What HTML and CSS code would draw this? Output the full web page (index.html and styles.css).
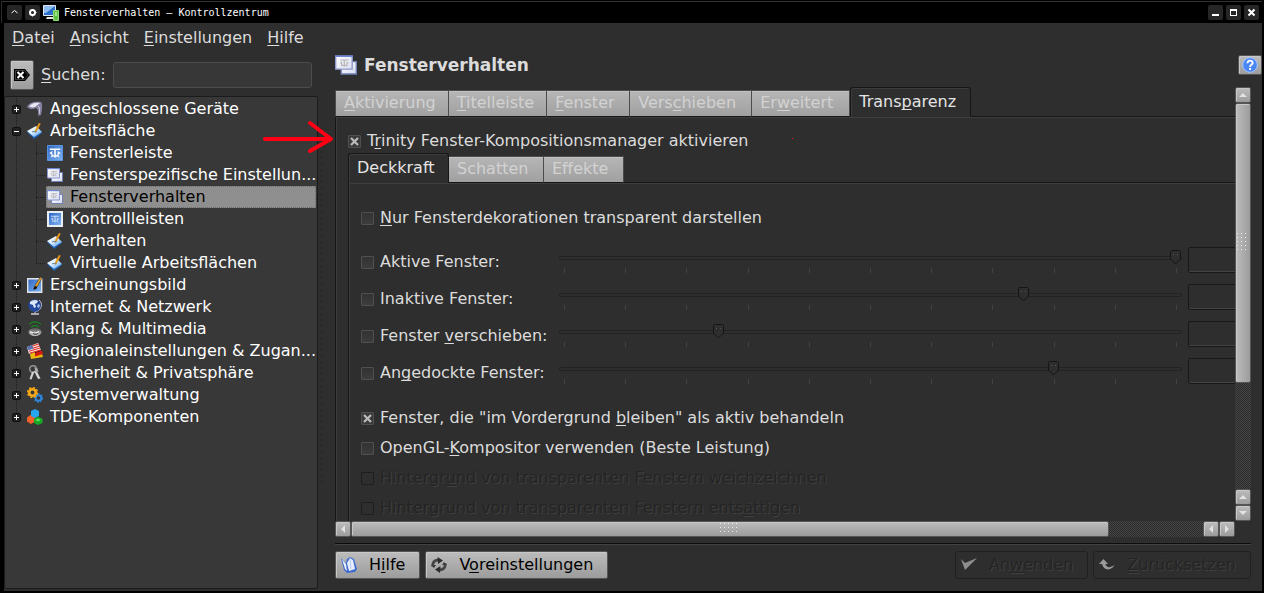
FILE: index.html
```html
<!DOCTYPE html>
<html lang="de">
<head>
<meta charset="utf-8">
<title>Fensterverhalten – Kontrollzentrum</title>
<link rel="stylesheet" href="styles.css">
</head>
<body>
<svg class="defs" aria-hidden="true">
  <defs>
    <linearGradient id="gBlue" x1="0" y1="0" x2="1" y2="1"><stop offset="0" stop-color="#2f66c4"/><stop offset="1" stop-color="#7fb4f2"/></linearGradient>
    <linearGradient id="gDesk" x1="0" y1="0" x2="1" y2="1"><stop offset="0" stop-color="#ffffff"/><stop offset="0.5" stop-color="#d8ecff"/><stop offset="1" stop-color="#2a86e8"/></linearGradient>
    <linearGradient id="gGrey" x1="0" y1="0" x2="0" y2="1"><stop offset="0" stop-color="#555"/><stop offset="1" stop-color="#ccc"/></linearGradient>
    <linearGradient id="gPaper" x1="0" y1="0" x2="1" y2="1"><stop offset="0" stop-color="#ffffff"/><stop offset="1" stop-color="#d9dcf0"/></linearGradient>
    <symbol id="gear" viewBox="0 0 10 10"><path d="M0 1h10v1.300H5.700V9H4.300V2.300H0z"/><path d="M2.500 3.500C1 5 2 8 5 8s4-3 2.500-4.500" fill="none" stroke="currentColor" stroke-width="1.200"/><path d="M0 5h2M8 5h2M1.500 8.500l1.300-1.300M8.500 8.500L7.200 7.200" stroke="currentColor" stroke-width="1.200"/></symbol>
    <symbol id="windows" viewBox="0 0 16 16"><path d="M4.500 5.500h11v9h-11z" fill="url(#gPaper)" stroke="#6f80b8"/><path d="M.5 1.500h12v9.500H.5z" fill="url(#gPaper)" stroke="#8d99cc"/><path d="M0 1h13v1.200H0z" fill="#6f86d4"/><use href="#gear" x="3.500" y="3.300" width="6.500" height="6.500" fill="#b4b4b4" color="#b4b4b4"/></symbol>
    <symbol id="panelblue" viewBox="0 0 16 16"><path d="M.5.5h15v15H.5z" fill="url(#gBlue)" stroke="#5b92dc"/><use href="#gear" x="2.500" y="2.500" width="11" height="11" fill="#fff" color="#fff"/></symbol>
    <symbol id="panelwhite" viewBox="0 0 16 16"><path d="M0 0h16v16H0z" fill="#e9eef2"/><path d="M2 2h12v12H2z" fill="url(#gBlue)"/><use href="#gear" x="4" y="4" width="8" height="8" fill="#c4daf6" color="#c4daf6"/></symbol>
    <symbol id="desk" viewBox="0 0 16 16"><path d="M0 9l9-5 6 6-8 6z" fill="#1d5fb0"/><path d="M0 8l9-5 6 6-8 5z" fill="url(#gDesk)"/><path d="M12 0l1.500.7-3.500 7-2 1.600.5-2.600z" fill="#f4a51c" stroke="#c47a0c" stroke-width=".4"/><path d="M5 9c2-1.500 3 .8 4.500-.5" fill="none" stroke="#246" stroke-width=".7"/></symbol>
    <symbol id="device" viewBox="0 0 16 16"><path d="M0 6c2-5 8-6 14-5 2 1 1 9 0 13l-3 1c1-3 0-7-2-8-3 1-6 2-9-1z" fill="#8680a0"/><path d="M2 5c3-3 7-4 11-3L8 6C5 7 3 6 2 5z" fill="#e8e5f2"/><path d="M11 5c2 1 2 6 1 8" stroke="#d4cfe2" fill="none"/></symbol>
    <symbol id="look" viewBox="0 0 16 16"><path d="M.7 1.700h14v13.600H.7z" fill="url(#gBlue)" stroke="#e4e4e4" stroke-width="1.400"/><path d="M13.500 0l1.500 1-5 9-3 2 .5-3z" fill="#e8a020" stroke="#333" stroke-width=".6"/><path d="M6.500 12.500c0-2 1.500-3.500 2.500-3.500l1 1c0 2-1.500 2.500-3.500 2.500z" fill="#111"/></symbol>
    <symbol id="globe" viewBox="0 0 16 16"><path d="M12 1c4 3 3 10-3 11.500H8v2" fill="none" stroke="#c9cfe4"/><circle cx="7.500" cy="6.500" r="6.300" fill="#24489c"/><path d="M3 3c2-2 6-3 8-1l-1 2-2 1 1 3-2 1-1-3-3-1z" fill="#dce8fa"/><path d="M11 5l2 1-1 3-2-1z" fill="#a9c2ee"/><path d="M4 15h8" stroke="#ccd" stroke-width="1.500"/></symbol>
    <symbol id="sound" viewBox="0 0 16 16"><path d="M2 3.500c3-3.500 9-3.500 12 0M4 6.500c2-2.500 6-2.500 8 0" fill="none" stroke="#138c22" stroke-width="1.100"/><ellipse cx="8" cy="11" rx="6.500" ry="4" fill="url(#gGrey)"/><path d="M3 10.500c2 2 7 2 9 0" fill="none" stroke="#f0f0f0" stroke-width="1.100"/><path d="M6 12.500c2 1.500 5 .5 5-.5" fill="none" stroke="#333"/></symbol>
    <symbol id="flags" viewBox="0 0 16 16"><path d="M3 11l11-4 2 7-12 2z" fill="#e8b710"/><path d="M8 6l6-1 1 3-7 3z" fill="#181818"/><path d="M8 10l7-2.500 1 3.500-8 2.500z" fill="#d41a10"/><path d="M0 4l11-4 3 7-12 4z" fill="#f5f5f5"/><path d="M5 3.300L11.500 1M6 5.300l6.500-2.300M2 8.300l11-3.300M2.500 10.300L13.500 7" stroke="#e0271c" stroke-width="1.200"/><path d="M0 4l5-2 1.500 3.500-5 1.800z" fill="#5a70b4"/></symbol>
    <symbol id="keys" viewBox="0 0 16 16"><circle cx="6" cy="4" r="3.300" fill="none" stroke="#8f8f8f" stroke-width="1.600"/><path d="M5 7L2.500 14l2 .5 3-8zM7 6l4 8 2.500-.5-4-8z" fill="#d4d4d4"/><path d="M7.500 2.500l3 1 1 3-3 1z" fill="#aaa"/></symbol>
    <symbol id="gears" viewBox="0 0 16 16"><circle cx="11.500" cy="11" r="2.800" fill="none" stroke="#2d85d8" stroke-width="2"/><circle cx="11.500" cy="11" r="4" fill="none" stroke="#2d85d8" stroke-width="1.500" stroke-dasharray="1.500 1.500"/><circle cx="5.500" cy="5.500" r="3.300" fill="none" stroke="#f5ab18" stroke-width="2.600"/><circle cx="5.500" cy="5.500" r="4.900" fill="none" stroke="#f0a414" stroke-width="1.500" stroke-dasharray="2.200 1.600"/></symbol>
    <symbol id="cubes" viewBox="0 0 16 16"><path d="M0 8.500l3.500-2.500L8 8v4.500L4 15l-4-2.500z" fill="#f0622a"/><path d="M4 2l4-2 4 2v5L8 9 4 7z" fill="#27a5ef"/><path d="M7 10l4-2.500 4.500 2.500v4L11 16l-4-2z" fill="#18a824"/><path d="M8.500 11l2.500-1.500 2.500 1.500-2.500 1.500z" fill="#5fe068"/></symbol>
    <symbol id="computer" viewBox="0 0 16 16"><path d="M.5.5h12v10H.5z" fill="#2a6cc8" stroke="#dfe8f2"/><path d="M1 1l11 0-9 7-2 0z" fill="#8cbcf0"/><path d="M4 12h6v2H3z" fill="#e6e6e6"/><path d="M10.500 5.500h5v10h-5z" fill="#5fc442" stroke="#8fdc78"/><path d="M12 8h2M12 10h2" stroke="#e8ffe0"/></symbol>
  </defs>
</svg>
<div class="frame">
  <header class="titlebar">
    <button class="wbtn" aria-label="Fenstermenü"><svg viewBox="0 0 15 15"><path d="M4.500 8L7.500 5.500 10.500 8" fill="none" stroke="#fff"/></svg></button>
    <button class="wbtn" aria-label="Anheften"><svg viewBox="0 0 15 15"><circle cx="7.500" cy="7.500" r="2.500" fill="none" stroke="#fff" stroke-width="2"/><path d="M7.500 4v1M7.500 10v1.500M4 7.500h1M10 7.500h1.500" stroke="#fff"/></svg></button>
    <svg class="appicon"><use href="#computer"/></svg>
    <h1 class="wtitle">Fensterverhalten – Kontrollzentrum</h1>
    <button class="wbtn" aria-label="Minimieren"><svg viewBox="0 0 15 15"><path d="M4 9h7v2H4z" fill="#fff"/></svg></button>
    <button class="wbtn" aria-label="Maximieren"><svg viewBox="0 0 15 15"><path d="M4 4h7v7H4zM5 6v4h5V6z" fill="#fff" fill-rule="evenodd"/></svg></button>
    <button class="wbtn" aria-label="Schließen"><svg viewBox="0 0 15 15"><path d="M4.500 4.500l6 6M10.500 4.500l-6 6" stroke="#fff" stroke-width="2"/></svg></button>
  </header>
  <div class="window">
    <aside class="side">
      <nav class="menubar">
        <button><u>D</u>atei</button><button><u>A</u>nsicht</button><button><u>E</u>instellungen</button><button><u>H</u>ilfe</button>
      </nav>
      <div class="search">
        <button class="clear raised" aria-label="Suche leeren"><svg viewBox="0 0 16 12"><path d="M0 0h11l5 6-5 6H0z" fill="#000"/><path d="M1.500 1.500h9l3.500 4.500-3.500 4.500h-9z" fill="none" stroke="#666" stroke-width=".6"/><path d="M3.500 3l6 6M9.500 3l-6 6" stroke="#fff" stroke-width="2"/></svg></button>
        <label for="q"><u>S</u>uchen:</label>
        <input id="q" type="text">
      </div>
      <ul class="tree">
        <li class="node"><button class="exp plus" aria-label="Aufklappen"></button><span class="item"><svg><use href="#device"/></svg>Angeschlossene Geräte</span></li>
        <li class="node"><button class="exp" aria-label="Zuklappen"></button><span class="item"><svg><use href="#desk"/></svg>Arbeitsfläche</span></li>
        <li>
          <ul class="sub">
            <li class="node"><span class="item"><svg><use href="#panelblue"/></svg>Fensterleiste</span></li>
            <li class="node"><span class="item"><svg><use href="#windows"/></svg>Fensterspezifische Einstellun...</span></li>
            <li class="node"><span class="item selected"><svg><use href="#windows"/></svg>Fensterverhalten</span></li>
            <li class="node"><span class="item"><svg><use href="#panelwhite"/></svg>Kontrollleisten</span></li>
            <li class="node"><span class="item"><svg><use href="#desk"/></svg>Verhalten</span></li>
            <li class="node last"><span class="item"><svg><use href="#desk"/></svg>Virtuelle Arbeitsflächen</span></li>
          </ul>
        </li>
        <li class="node"><button class="exp plus" aria-label="Aufklappen"></button><span class="item"><svg><use href="#look"/></svg>Erscheinungsbild</span></li>
        <li class="node"><button class="exp plus" aria-label="Aufklappen"></button><span class="item"><svg><use href="#globe"/></svg>Internet &amp; Netzwerk</span></li>
        <li class="node"><button class="exp plus" aria-label="Aufklappen"></button><span class="item"><svg><use href="#sound"/></svg>Klang &amp; Multimedia</span></li>
        <li class="node"><button class="exp plus" aria-label="Aufklappen"></button><span class="item"><svg><use href="#flags"/></svg>Regionaleinstellungen &amp; Zugan...</span></li>
        <li class="node"><button class="exp plus" aria-label="Aufklappen"></button><span class="item"><svg><use href="#keys"/></svg>Sicherheit &amp; Privatsphäre</span></li>
        <li class="node"><button class="exp plus" aria-label="Aufklappen"></button><span class="item"><svg><use href="#gears"/></svg>Systemverwaltung</span></li>
        <li class="node last"><button class="exp plus" aria-label="Aufklappen"></button><span class="item"><svg><use href="#cubes"/></svg>TDE-Komponenten</span></li>
      </ul>
    </aside>
    <div class="splitter"></div>
    <main class="main">
      <div class="head">
        <svg class="headicon"><use href="#windows"/></svg>
        <h2>Fensterverhalten</h2>
        <button class="help raised" aria-label="Hilfe zu diesem Modul"><svg viewBox="0 0 16 16"><circle cx="8" cy="8" r="7.300" fill="#4a86f4" stroke="#a9c8ff"/><path d="M5.500 6.200c0-3.400 5.200-3.200 5.200-.4C10.700 7.800 8 7.800 8 10" fill="none" stroke="#fff" stroke-width="1.800"/><path d="M7 11h2v2H7z" fill="#fff"/></svg></button>
      </div>
      <div class="scroller">
        <div class="view">
          <div class="content">
            <div class="tabs outer" role="tablist">
              <button role="tab"><u>A</u>ktivierung</button><button role="tab"><u>T</u>itelleiste</button><button role="tab"><u>F</u>enster</button><button role="tab">Vers<u>c</u>hieben</button><button role="tab">Er<u>w</u>eitert</button><button role="tab" class="on" aria-selected="true">Trans<u>p</u>arenz</button><i class="rest"></i>
            </div>
            <div class="pane">
              <label class="check"><input type="checkbox" checked><span>T<u>r</u>inity Fenster-Kompositionsmanager aktivieren</span></label>
              <div class="tabs inner" role="tablist">
                <button role="tab" class="on" aria-selected="true">Deckkraft</button><button role="tab">Schatten</button><button role="tab">Effekte</button><i class="rest"></i>
              </div>
              <div class="pane deep">
                <label class="check"><input type="checkbox"><span><u>N</u>ur Fensterdekorationen transparent darstellen</span></label>
                <div class="sliders">
                  <label class="check"><input type="checkbox"><span>Aktive Fenster:</span></label>
                  <div class="range"><input type="range" disabled value="100" aria-label="Aktive Fenster"><div class="ticks"><i></i><i></i><i></i><i></i><i></i><i></i><i></i><i></i><i></i><i></i><i></i></div></div>
                  <input class="spin" type="text" disabled aria-label="Aktive Fenster in Prozent">
                  <label class="check"><input type="checkbox"><span>Inaktive Fenster:</span></label>
                  <div class="range"><input type="range" disabled value="75" aria-label="Inaktive Fenster"><div class="ticks"><i></i><i></i><i></i><i></i><i></i><i></i><i></i><i></i><i></i><i></i><i></i></div></div>
                  <input class="spin" type="text" disabled aria-label="Inaktive Fenster in Prozent">
                  <label class="check"><input type="checkbox"><span>Fenster <u>v</u>erschieben:</span></label>
                  <div class="range"><input type="range" disabled value="25" aria-label="Fenster verschieben"><div class="ticks"><i></i><i></i><i></i><i></i><i></i><i></i><i></i><i></i><i></i><i></i><i></i></div></div>
                  <input class="spin" type="text" disabled aria-label="Fenster verschieben in Prozent">
                  <label class="check"><input type="checkbox"><span>An<u>g</u>edockte Fenster:</span></label>
                  <div class="range"><input type="range" disabled value="80" aria-label="Angedockte Fenster"><div class="ticks"><i></i><i></i><i></i><i></i><i></i><i></i><i></i><i></i><i></i><i></i><i></i></div></div>
                  <input class="spin" type="text" disabled aria-label="Angedockte Fenster in Prozent">
                </div>
                <div class="options">
                  <label class="check"><input type="checkbox" checked><span>Fenster, die "im Vordergrund <u>b</u>leiben" als aktiv behandeln</span></label>
                  <label class="check"><input type="checkbox"><span>OpenGL-<u>K</u>ompositor verwenden (Beste Leistung)</span></label>
                  <label class="check off"><input type="checkbox" disabled><span>Hintergr<u>u</u>nd von transparenten Fenstern weichzeichnen</span></label>
                  <label class="check off"><input type="checkbox" disabled><span>Hintergrund von transparenten Fenstern ents<u>ä</u>ttigen</span></label>
                </div>
              </div>
            </div>
          </div>
        </div>
        <div class="vbar">
          <button class="raised" aria-label="Nach oben"><svg viewBox="0 0 14 14"><path d="M7 5l4 4H3z"/></svg></button>
          <div class="vthumb raised"><i class="grip"></i></div>
          <div class="vtrack"></div>
          <button class="raised" aria-label="Nach oben"><svg viewBox="0 0 14 14"><path d="M7 5l4 4H3z"/></svg></button>
          <button class="raised" aria-label="Nach unten"><svg viewBox="0 0 14 14"><path d="M7 9l4-4H3z"/></svg></button>
        </div>
        <div class="hbar">
          <button class="raised" aria-label="Nach links"><svg viewBox="0 0 14 14"><path d="M5 7l4-4v8z"/></svg></button>
          <div class="hthumb raised"><i class="grip wide"></i></div>
          <div class="htrack"></div>
          <button class="raised" aria-label="Nach links"><svg viewBox="0 0 14 14"><path d="M5 7l4-4v8z"/></svg></button>
          <button class="raised" aria-label="Nach rechts"><svg viewBox="0 0 14 14"><path d="M9 7L5 3v8z"/></svg></button>
        </div>
      </div>
      <footer class="actions">
        <button class="act raised"><svg viewBox="0 0 16 16"><path d="M0 1l5 5 1-4 3-2 4 2 3 10-2 3-8 1-3-3z" fill="#3f6bd0"/><path d="M1 2l4 5 1 7-2-2zM6 6l3-5 3 2 2 9-6 2z" fill="#e6eefc"/><path d="M9 2l1 10" stroke="#b8ccf4"/></svg><span>H<u>i</u>lfe</span></button>
        <button class="act raised"><svg viewBox="0 0 16 16"><path d="M2 9.500C1 5.500 4 3 7 3.200M14 6.500c1 4-2 6.500-5.500 6.300" fill="none" stroke="#444" stroke-width="2.800"/><path d="M6.500 0l5.500 3.500L7 7zM9.500 9L4 12.500 9 16z" fill="#2c2c2c"/><path d="M0 8h5l-2 3zM11 8h5l-3-3z" fill="#3c3c3c"/></svg><span>V<u>o</u>reinstellungen</span></button>
        <button class="act off push" disabled><svg viewBox="0 0 16 16"><path d="M0 2l4 4L16 1 4 13z" fill="#8e8e8e"/></svg><span>An<u>w</u>enden</span></button>
        <button class="act off" disabled><svg viewBox="0 0 16 16"><path d="M0 7l4.500-5L9 7H6.500c1 4 4.500 4 9 1-3 6-11 6-12.500-1z" fill="#9a9a9a"/></svg><span><u>Z</u>urücksetzen</span></button>
      </footer>
    </main>
  </div>
  <svg class="pointer" viewBox="0 0 72 36" aria-hidden="true"><path d="M3 21h65M48 5l21 16-21 12" fill="none" stroke="#ff0014" stroke-width="4" stroke-linecap="round" stroke-linejoin="round"/></svg>
  <i class="speck"></i>
</div>
</body>
</html>
```
FILE: styles.css
```css
* { box-sizing: border-box; }
body {
  margin: 0;
  background: #000;
  color: #dcdcdc;
  font: 16px/22px "DejaVu Sans", sans-serif;
}
button, input { font: inherit; color: inherit; margin: 0; padding: 0; border: 0; background: none; }
ul { list-style: none; margin: 0; padding: 0; }
u { text-underline-offset: 2px; text-decoration-thickness: 1px; text-decoration-skip-ink: none; }
svg { display: block; flex: none; }
.defs { position: absolute; width: 0; height: 0; }

.frame {
  position: relative;
  display: flex;
  flex-direction: column;
  height: 100vh;
  padding: 1px 2px 2px 1px;
  overflow: hidden;
}
.titlebar {
  display: flex;
  align-items: center;
  gap: 3px;
  height: 22px;
  padding: 0 3px 0 5px;
  border-top: 1px solid #333;
  border-left: 1px solid #2a2a2a;
}
.wbtn { width: 15px; height: 15px; background: #262626; border-radius: 2px; }
.wbtn svg { width: 15px; height: 15px; }
.appicon { width: 16px; height: 16px; }
.wtitle {
  flex: 1;
  margin: 0 0 0 2px;
  color: #fff;
  font: 10px/16px "DejaVu Sans Mono", monospace;
}

.window {
  flex: 1;
  display: flex;
  min-height: 0;
  margin-left: 3px;
  background: #2e2e2e;
}
.side { flex: none; width: 314px; display: flex; flex-direction: column; }
.menubar { display: flex; gap: 15px; padding: 4px 8px 0; height: 37px; align-items: flex-start; }
.search { display: flex; align-items: center; gap: 7px; height: 30px; padding: 0 6px; }
.search input {
  flex: 1;
  min-width: 0;
  height: 26px;
  padding: 0 4px;
  background: #373737;
  border: 1px solid #4c4c4c;
  border-radius: 3px;
}
.raised {
  background: linear-gradient(#bcbcbc, #9c9c9c);
  border: 1px solid #555;
  border-radius: 2px;
  box-shadow: inset 1px 1px #c8c8c8;
}
.clear { width: 24px; height: 30px; display: grid; place-items: center; }
.clear svg { width: 16px; height: 12px; }

.tree {
  flex: 1;
  margin: 6px 0 2px;
  padding: 1px 1px 0 0;
  background: #383838;
  border: 1px solid #1b1b1b;
  border-radius: 2px;
  color: #fff;
}
.node {
  display: flex;
  align-items: center;
  height: 22px;
  padding-left: 7px;
  background: repeating-linear-gradient(#1e1e1e 0 1px, transparent 1px 2px) 11px 0 / 1px 100% no-repeat;
}
.node > .item { flex: 1; }
.node.last { background-size: 1px 50%; }
.sub { background: repeating-linear-gradient(#1e1e1e 0 1px, transparent 1px 2px) 11px 0 / 1px 100% no-repeat; }
.sub .node {
  padding-left: 41px;
  background:
    repeating-linear-gradient(#1e1e1e 0 1px, transparent 1px 2px) 31px 0 / 1px 100% no-repeat,
    repeating-linear-gradient(90deg, #1e1e1e 0 1px, transparent 1px 2px) 31px 11px / 9px 1px no-repeat;
}
.sub .node.last { background-size: 1px 50%, 9px 1px; }
.exp {
  width: 9px;
  height: 9px;
  margin-right: 5px;
  border: 1px solid #111;
  border-radius: 2px;
  background: linear-gradient(#fff, #fff) center / 5px 1px no-repeat #222;
}
.exp.plus {
  background:
    linear-gradient(#fff, #fff) center / 5px 1px no-repeat,
    linear-gradient(#fff, #fff) center / 1px 5px no-repeat #222;
}
.item { display: flex; align-items: center; gap: 7px; height: 22px; padding-left: 1px; white-space: nowrap; }
.item svg { width: 16px; height: 16px; }
.item.selected { background: #8f8f8f; color: #000; outline: 1px dotted #6c6c6c; outline-offset: -1px; }

.splitter {
  flex: none;
  width: 17px;
  background: repeating-linear-gradient(#202020 0 2px, transparent 2px 6px) 3px center / 1px 360px no-repeat;
}
.main { flex: 1; min-width: 0; display: flex; flex-direction: column; }
.head { display: flex; align-items: center; height: 64px; padding-top: 20px; }
.headicon { width: 22px; height: 22px; }
.head h2 { flex: 1; margin: 0 0 0 7px; font-size: 17px; line-height: 22px; }
.help { width: 24px; height: 20px; display: grid; place-items: center; }
.help svg { width: 16px; height: 16px; }

.scroller {
  flex: 1;
  min-height: 0;
  display: grid;
  grid-template: minmax(0, 1fr) 16px / minmax(0, 1fr) 16px;
  margin-right: 11px;
}
.view { overflow: hidden; }
.content { width: calc(100% + 80px); }
.tabs { display: flex; align-items: flex-end; height: 30px; }
.tabs button {
  flex: none;
  height: 27px;
  padding: 0 12px 2px 8px;
  text-align: left;
  color: #d2d2d2;
  background: linear-gradient(#b6b6b6, #a0a0a0);
  border: solid #4c4c4c;
  border-width: 1px 1px 1px 0;
  border-bottom-color: #161616;
  box-shadow: inset 0 1px #c2c2c2;
}
.tabs button:first-child { border-left-width: 1px; }
.tabs button.on {
  height: 30px;
  padding: 0 12px 1px 8px;
  color: #e4e4e4;
  background: #2e2e2e;
  border: solid #161616;
  border-width: 1px 1px 0;
  border-radius: 3px 3px 0 0;
  box-shadow: inset 1px 1px #3c3c3c;
}
.outer button:nth-child(3) { min-width: 83px; }
.outer button:nth-child(4) { min-width: 122px; }
.outer button:nth-child(5) { min-width: 98px; }
.outer button:nth-child(6) { min-width: 121px; }
.inner button:nth-child(1) { min-width: 101px; }
.inner button:nth-child(2) { min-width: 95px; }
.inner button:nth-child(3) { min-width: 80px; }
.rest { flex: 1; height: 1px; background: #161616; }
.pane { border: solid #161616; border-width: 0 1px 1px; box-shadow: inset 1px 1px #3e3e3e; padding: 13px 12px 12px; }
.inner { margin-top: 1px; }
.deep { padding: 24px 12px 12px; }
.check { display: flex; align-items: center; gap: 6px; height: 22px; white-space: nowrap; }
.check input {
  appearance: none;
  flex: none;
  width: 13px;
  height: 13px;
  background: linear-gradient(#333, #3c3c3c);
  border: 1px solid #505050;
  border-radius: 1px;
}
.check input:checked {
  background: url("data:image/svg+xml,%3Csvg xmlns='http://www.w3.org/2000/svg' viewBox='0 0 11 11'%3E%3Cpath d='M2 2l7 7M9 2l-7 7' stroke='%23bbb' stroke-width='2.200'/%3E%3C/svg%3E") center / 11px 11px no-repeat #3a3a3a;
}
.check.off, .act.off { color: #242424; text-shadow: 1px 1px #404040; }
.check.off input { background: none; border-color: #1e1e1e; }
.sliders {
  display: grid;
  grid-template-columns: 192px minmax(0, 1fr) 101px;
  gap: 11px 6px;
  margin-top: 18px;
  align-items: center;
}
.sliders .check { height: 26px; padding-top: 4px; }
.range { height: 26px; padding-top: 3px; }
.range input { appearance: none; display: block; width: 100%; height: 16px; }
.range input::-webkit-slider-runnable-track {
  height: 4px;
  border: 1px solid #222;
  border-radius: 2px;
}
.range input::-webkit-slider-thumb {
  appearance: none;
  width: 11px;
  height: 15px;
  margin-top: -7px;
  background: url("data:image/svg+xml,%3Csvg xmlns='http://www.w3.org/2000/svg' viewBox='0 0 11 15'%3E%3Cpath d='M1.500.5h8l1 1V9l-5 5-5-5V1.500z' fill='%232e2e2e' stroke='%23151515'/%3E%3Cpath d='M3 4h1v1H3zM7 4h1v1H7z' fill='%23555'/%3E%3C/svg%3E") center / 11px 15px no-repeat;
}
.ticks { display: flex; justify-content: space-between; height: 5px; margin-top: 2px; padding: 0 5px; }
.ticks i { width: 1px; background: #424242; }
.spin {
  width: 100%;
  height: 26px;
  padding: 0 4px;
  border: 1px solid #181818;
  border-radius: 2px;
  box-shadow: inset 0 -1px #444;
}
.options { display: grid; gap: 8px; margin-top: 23px; }

.vbar { display: flex; flex-direction: column; }
.vbar button { height: 16px; }
.hbar { display: flex; }
.hbar button { width: 16px; }
.vbar svg, .hbar svg { width: 14px; height: 14px; fill: #e2e2e2; }
.vthumb, .hthumb { display: grid; place-items: center; }
.vthumb { flex: 279; background: linear-gradient(90deg, #bcbcbc, #9c9c9c); }
.hthumb { flex: 757; }
.vtrack, .htrack { background: repeating-conic-gradient(#444 0 25%, #2c2c2c 0 50%) 0 0 / 2px 2px; }
.vtrack { flex: 107; }
.htrack { flex: 94; }
.grip {
  width: 12px;
  height: 20px;
  background: conic-gradient(at 1px 1px, transparent 75%, #eee 0) 0 0 / 4px 4px;
}
.grip.wide { width: 20px; height: 12px; }

.actions {
  display: flex;
  gap: 5px;
  margin: 6px 11px 0 0;
  padding: 7px 0 12px;
  border-top: 1px solid #0c0c0c;
  box-shadow: inset 0 1px #424242;
}
.act { display: flex; align-items: center; height: 28px; padding: 0 14px 0 5px; gap: 12px; color: #000; }
.act svg { width: 16px; height: 16px; }
.act.off { border: 1px solid #202020; border-radius: 3px; }
.push { margin-left: auto; }

.pointer { position: absolute; left: 262px; top: 118px; width: 72px; height: 36px; }
.speck { position: absolute; left: 792px; top: 138px; width: 1px; height: 1px; background: #ff0014; }
```
